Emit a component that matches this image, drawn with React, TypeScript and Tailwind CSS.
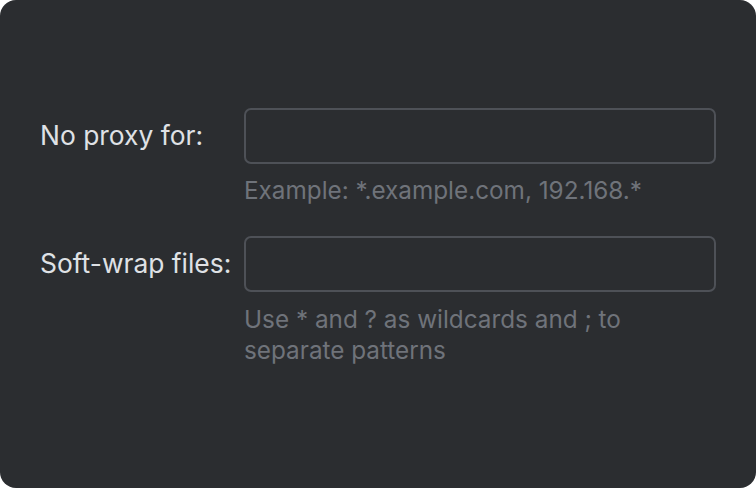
export default function App() {
  return (
    <div className="w-[756px] h-[488px] bg-white">
      <div className="w-full h-full rounded-[16px] bg-[#2b2d30] pl-10 pt-[108px] font-['Inter',sans-serif]">
        <div className="grid grid-cols-[204px_472px] gap-y-[30px]">
          <label className="flex items-center h-[56px] text-[26.4px] text-[#dfe1e5]">
            No proxy for:
          </label>
          <div>
            <input className="w-full h-[56px] rounded-[7px] border-2 border-[#4e5157] bg-transparent outline-none" />
            <p className="mt-[11px] text-[24.3px] leading-[31px] text-[#6f737a]">
              Example: *.example.com, 192.168.*
            </p>
          </div>
          <label className="flex items-center h-[56px] text-[26.4px] text-[#dfe1e5]">
            Soft-wrap files:
          </label>
          <div>
            <input className="w-full h-[56px] rounded-[7px] border-2 border-[#4e5157] bg-transparent outline-none" />
            <p className="mt-[12px] text-[24.3px] leading-[31px] text-[#6f737a]">
              Use * and ? as wildcards and ; to separate patterns
            </p>
          </div>
        </div>
      </div>
    </div>
  );
}
